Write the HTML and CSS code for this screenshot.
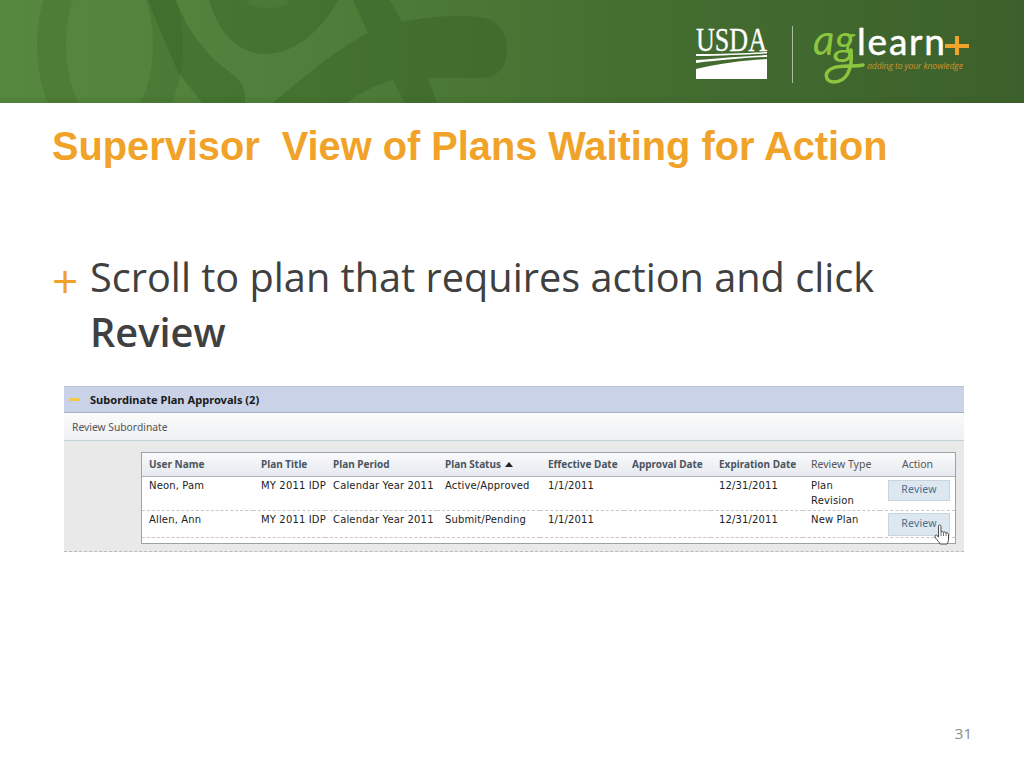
FILE: index.html
```html
<!DOCTYPE html>
<html lang="en">
<head>
<meta charset="utf-8">
<title>Supervisor View of Plans Waiting for Action</title>
<link rel="stylesheet" href="styles.css">
</head>
<body>
<div class="slide">
  <header class="banner">
    <svg class="banner-art" width="1024" height="103" viewBox="0 0 1024 103" aria-hidden="true">
      <path class="art-ring" fill-rule="evenodd" d="M110 -66C150 -66 183 -15 183 45C183 105 150 156 110 156C70 156 37 105 37 45C37 -15 70 -66 110 -66ZM110 -38C85 -38 66 1 66 45C66 89 85 128 110 128C134 128 153 89 153 45C153 1 134 -38 110 -38Z"/>
      <g class="art-shapes">
        <path d="M148 0H175C184 18 190 32 200 43C208 55 218 63 227 70C238 78 245 85 245 95V103H202L178 72L160 30Z"/>
        <path d="M209 0H338C322 30 295 54 265 54C238 54 218 32 209 0Z"/>
        <path d="M353 0H390L402 22C420 18 440 16 457 16C475 16 490 17 497 24C504 31 507 40 507 50C507 65 500 78 480 78L428 78L437 103H405L393 80C375 85 358 94 347 103H273C300 80 335 50 368 33Z"/>
      </g>
      <ellipse class="art-light" cx="268" cy="0" rx="22" ry="8"/>
      <rect class="art-foot" y="97" width="1024" height="6"/>
    </svg>
    <svg class="logo" width="290" height="80" viewBox="0 0 290 80" role="img" aria-label="USDA AgLearn+">
      <text class="logo-usda" x="5" y="41" textLength="71" lengthAdjust="spacingAndGlyphs">USDA</text>
      <path class="logo-white" d="M5 44C30 44 55 43 76 42V43.500C55 44.500 30 45.500 5 46Z"/>
      <path class="logo-white" d="M5 50C30 48 55 46 76 45V47C55 47.500 30 50 5 53Z"/>
      <path class="logo-white" d="M5 59C30 53 55 50 76 49V69H5Z"/>
      <rect class="logo-rule" x="101" y="16" width="1" height="57"/>
      <text class="logo-ag" x="122" y="45" textLength="42">ag</text>
      <path class="logo-loop" d="M160 40C162 60 155 72 143 72C134 72 132 62 142 58C150 55 160 57 172 55"/>
      <text class="logo-learn" x="166" y="45" textLength="88">learn</text>
      <path class="logo-plus" d="M254 36H278M266 26V45"/>
      <text class="logo-tag" x="176" y="59" textLength="96">adding to your knowledge</text>
    </svg>
  </header>

  <main class="content">
    <h1 class="title">Supervisor&nbsp; View of Plans Waiting for Action</h1>
    <div class="bullet">
      <span class="bullet-mark">+</span>
      <p class="bullet-text">Scroll to plan that requires action and click <b>Review</b></p>
    </div>

    <section class="panel">
      <div class="panel-title"><span class="collapse"></span>Subordinate Plan Approvals (2)</div>
      <div class="panel-sub">Review Subordinate</div>
      <div class="panel-body">
        <div class="table-box">
          <table class="plans">
            <colgroup>
              <col class="c1"><col class="c2"><col class="c3"><col class="c4"><col class="c5"><col class="c6"><col class="c7"><col class="c8"><col class="c9">
            </colgroup>
            <thead>
              <tr>
                <th>User Name</th><th>Plan Title</th><th>Plan Period</th>
                <th>Plan Status <span class="sort"></span></th>
                <th>Effective Date</th><th>Approval Date</th><th>Expiration Date</th>
                <th class="light">Review Type</th><th class="light center">Action</th>
              </tr>
            </thead>
            <tbody>
              <tr class="row-a">
                <td>Neon, Pam</td><td>MY 2011 IDP</td><td>Calendar Year 2011</td><td>Active/Approved</td>
                <td>1/1/2011</td><td></td><td>12/31/2011</td><td>Plan<br>Revision</td>
                <td class="action"><span class="btn">Review</span></td>
              </tr>
              <tr class="row-b">
                <td>Allen, Ann</td><td>MY 2011 IDP</td><td>Calendar Year 2011</td><td>Submit/Pending</td>
                <td>1/1/2011</td><td></td><td>12/31/2011</td><td>New Plan</td>
                <td class="action tight"><span class="btn tall">Review
                  <svg class="hand" width="16" height="21" viewBox="0 0 16 21" aria-hidden="true">
                    <path d="M4.500 1.500C5.500.5 7 1 7 2.500V8C8 7.300 9 7.500 9.500 8.300C10.500 7.700 11.500 8 12 9C13 8.500 14.500 9 14.500 10.500V15C14.500 17 14 18.500 13 20H6C5 18 3.500 16.500 1.500 14C.5 12.500 1 11 2.500 11.200L4.500 13V2.500Z" fill="#fff" stroke="#333" stroke-width=".9"/>
                    <path d="M7 8V12M9.500 8.300V12M12 9V12" fill="none" stroke="#333" stroke-width=".7"/>
                  </svg>
                </span></td>
              </tr>
            </tbody>
          </table>
        </div>
      </div>
    </section>
  </main>
  <footer class="page-no">31</footer>
</div>
</body>
</html>
```
FILE: styles.css
```css
* { box-sizing: border-box; }
html, body { margin: 0; padding: 0; background: #fff; }
.slide { width: 1024px; height: 768px; overflow: hidden; display: flex; flex-direction: column; position: relative; }

.banner {
  position: relative; height: 103px; flex: none;
  display: flex; justify-content: flex-end; align-items: flex-start;
  background: linear-gradient(90deg, #57883f 0%, #4f7f3b 30%, #456f31 60%, #3c602b 100%);
}
.banner-art { position: absolute; left: 0; top: 0; }
.art-ring { fill: #2f5a1e; opacity: .2; }
.art-shapes { fill: #2f5a1e; opacity: .32; }
.art-light { fill: #56833f; opacity: .35; }
.art-foot { fill: #2f5a1e; opacity: .1; }
.logo { position: relative; margin: 10px 43px 0 0; }
.logo-usda { font: 33px "Liberation Serif", serif; fill: #fff; stroke: #fff; stroke-width: .3px; }
.logo-white { fill: #fff; }
.logo-rule { fill: #a9bd9f; }
.logo-ag { font: italic 42px "Lato", sans-serif; fill: #8cc63f; }
.logo-loop { fill: none; stroke: #8cc63f; stroke-width: 3.500px; stroke-linecap: round; }
.logo-learn { font: 37px "Lato", sans-serif; fill: #fff; stroke: #fff; stroke-width: .5px; }
.logo-plus { fill: none; stroke: #f0a428; stroke-width: 4px; }
.logo-tag { font: italic 8.700px "Open Sans", sans-serif; fill: #cf922a; }

.content { flex: 1; padding: 21px 60px 0 52px; }
.title {
  margin: 0; font: bold 39.750px/44px "Liberation Sans", Arial, sans-serif; color: #f0a328; white-space: nowrap;
}
.bullet { display: flex; margin-top: 82px; color: #404040; font: 39.700px/55px "Open Sans", sans-serif; }
.bullet-mark { width: 38px; flex: none; margin-top: 3px; color: #f0a328; font-size: 46px; font-weight: 400; line-height: 55px; }
.bullet-text { margin: 0; width: 820px; }
.bullet-text b { font-weight: 600; }

.panel { margin: 26px 0 0 12px; width: 900px; height: 166px; background: #e9e9e9; border-bottom: 1px dashed #bbb; font-family: "Noto Sans", sans-serif; }
.panel-title {
  height: 27px; display: flex; align-items: center; padding-left: 5px;
  background: #c9d2e6; border-top: 1px solid #bcc4d6; border-bottom: 1px solid #a9b2c4;
  font-size: 11.100px; font-weight: 700; color: #1a1a1a;
}
.collapse { width: 11px; height: 3px; margin-right: 10px; background: #f3c842; border-radius: 2px; }
.panel-sub {
  height: 28px; display: flex; align-items: center; padding-left: 8px;
  background: linear-gradient(#fbfbfb, #eef0f2); border-bottom: 1px solid #c3d0d6;
  font-size: 10.300px; color: #555;
}
.panel-body { padding: 11px 8px 0 77px; }
.table-box { width: 815px; border: 1px solid #9aa3a8; background: #fff; padding-bottom: 5px; }
.plans { width: 813px; table-layout: fixed; border-collapse: collapse; font-size: 10px; color: #222; }
.c1 { width: 111px; } .c2 { width: 72px; } .c3 { width: 112px; } .c4 { width: 103px; }
.c5 { width: 84px; } .c6 { width: 87px; } .c7 { width: 92px; } .c8 { width: 77px; } .c9 { width: 75px; }
.plans th {
  height: 23px; padding: 0 0 0 8px; text-align: left; font-weight: 700; color: #4a5560; white-space: nowrap;
  background: linear-gradient(#f9fafb, #e6eaef); border-bottom: 1px solid #aab4bc;
}
.plans th:first-child, .plans td:first-child { padding-left: 7px; }
.plans th.light { font-weight: 400; color: #555; font-size: 10.500px; }
.plans th.center { text-align: center; padding-left: 0; padding-right: 0; }
.sort { display: inline-block; width: 0; height: 0; margin-left: 1px; vertical-align: 1px; border: 4px solid transparent; border-top: 0; border-bottom: 5px solid #222; }
.plans td {
  padding: 1px 0 0 8px; vertical-align: top; line-height: 15.500px; border-bottom: 1px dashed #c8c8c8; white-space: nowrap;
  font-family: "DejaVu Sans", sans-serif; letter-spacing: .15px;
}
.row-a { height: 34px; }
.row-b { height: 27px; }
.plans td.action { padding: 3px 0 0 8px; font-family: "Noto Sans", sans-serif; font-size: 10.500px; letter-spacing: .2px; }
.plans td.tight { padding-top: 2px; }
.btn {
  position: relative; display: flex; align-items: center; justify-content: center;
  width: 62px; height: 21px; background: #dce7ef; border: 1px solid #c7d5df; color: #4a6f90;
}
.btn.tall { height: 23px; }
.hand { position: absolute; left: 45px; top: 10px; }

.page-no { position: absolute; right: 52px; top: 724px; font: 15px/18px "Open Sans", sans-serif; color: #8a8a8a; }
```
